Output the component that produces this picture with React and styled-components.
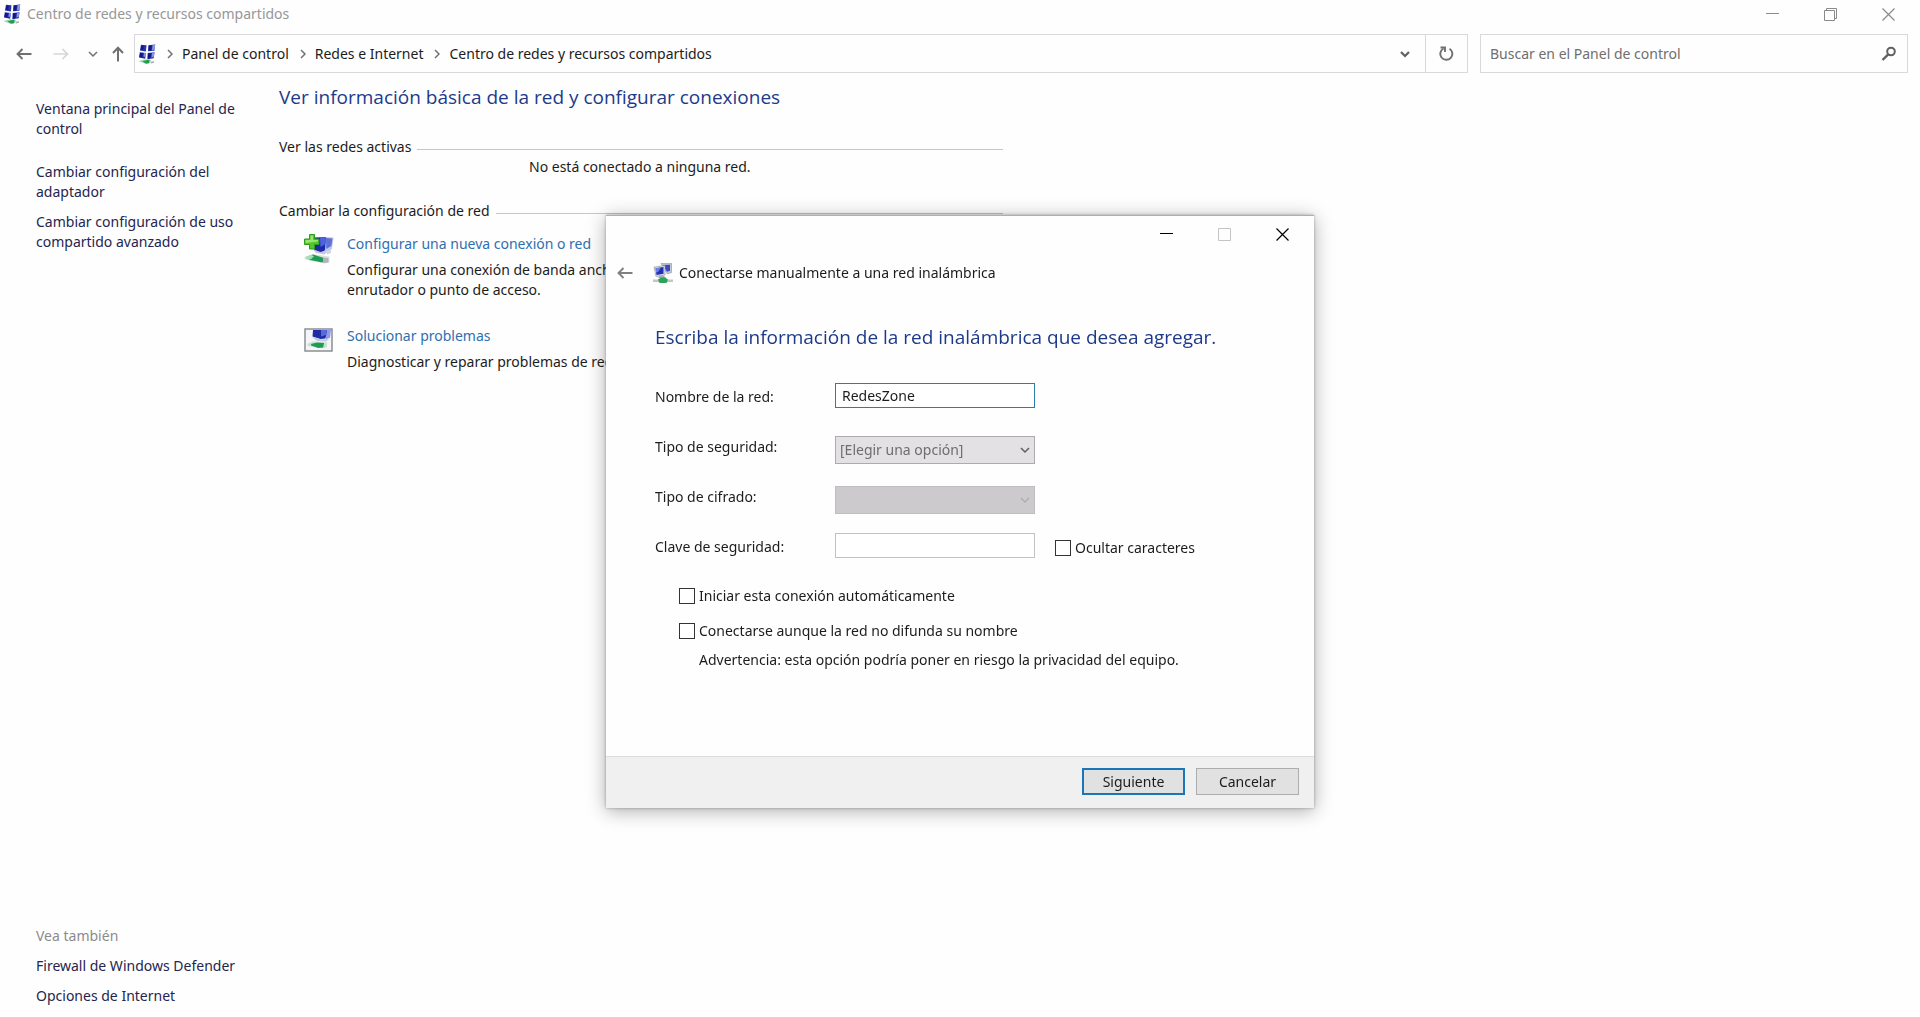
import styled, { createGlobalStyle, css } from 'styled-components';

const App = () => {
  return (
    <>
      <GlobalStyle />
      <Window>
        <TitleBar>
          <Caption>
            <NetworkIcon />
            <span>Centro de redes y recursos compartidos</span>
          </Caption>
          <WindowControls color="#8a8a8a" restore />
        </TitleBar>

        <Toolbar>
          <NavButtons>
            <NavButton $width={20} aria-label="Atrás"><ArrowLeft color="#707070" /></NavButton>
            <NavButton $width={30} aria-label="Adelante" disabled><ArrowRight /></NavButton>
            <NavButton $width={10} aria-label="Recientes"><Chevron color="#707070" /></NavButton>
            <NavButton $width={16} aria-label="Arriba"><ArrowUp /></NavButton>
          </NavButtons>
          <AddressBar>
            <Crumbs>
              <NetworkIcon />
              <Separator />
              <a href="#panel">Panel de control</a>
              <Separator />
              <a href="#redes">Redes e Internet</a>
              <Separator />
              <a href="#centro">Centro de redes y recursos compartidos</a>
            </Crumbs>
            <BarButton $width={40} aria-label="Ubicaciones anteriores">
              <Chevron color="#606060" thick />
            </BarButton>
            <BarButton $width={42} $divider aria-label="Actualizar">
              <RefreshIcon />
            </BarButton>
          </AddressBar>
          <SearchBox>
            <input type="search" aria-label="Buscar" placeholder="Buscar en el Panel de control" />
            <SearchIcon />
          </SearchBox>
        </Toolbar>

        <Body>
          <Sidebar>
            <SideLinks>
              <HomeLink href="#principal">Ventana principal del Panel de control</HomeLink>
              <SideLink href="#adaptador">Cambiar configuración del adaptador</SideLink>
              <SideLink href="#avanzado">Cambiar configuración de uso compartido avanzado</SideLink>
            </SideLinks>
            <SideLinks>
              <SideTitle>Vea también</SideTitle>
              <SideLink href="#firewall">Firewall de Windows Defender</SideLink>
              <SideLink href="#internet">Opciones de Internet</SideLink>
            </SideLinks>
          </Sidebar>

          <Content>
            <Heading as="h1">Ver información básica de la red y configurar conexiones</Heading>
            <Section>
              <SectionTitle>Ver las redes activas</SectionTitle>
              <EmptyText>No está conectado a ninguna red.</EmptyText>
            </Section>
            <Section>
              <SectionTitle>Cambiar la configuración de red</SectionTitle>
              <Task>
                <NewConnectionIcon />
                <div>
                  <a href="#nueva">Configurar una nueva conexión o red</a>
                  <p>
                    Configurar una conexión de banda ancha
                    <br />
                    enrutador o punto de acceso.
                  </p>
                </div>
              </Task>
              <Task>
                <TroubleshootIcon />
                <div>
                  <a href="#problemas">Solucionar problemas</a>
                  <p>Diagnosticar y reparar problemas de red</p>
                </div>
              </Task>
            </Section>
          </Content>
        </Body>
      </Window>

      <Overlay>
        <Dialog role="dialog" aria-labelledby="dialog-title">
          <DialogBar>
            <WindowControls color="#000000" maxColor="#c4c4c4" />
          </DialogBar>
          <DialogHeader>
            <NavButton $width={20} aria-label="Volver"><ArrowLeft color="#808080" /></NavButton>
            <WizardIcon />
            <span id="dialog-title">Conectarse manualmente a una red inalámbrica</span>
          </DialogHeader>
          <Form>
            <Heading>Escriba la información de la red inalámbrica que desea agregar.</Heading>
            <Fields>
              <label htmlFor="nombre">Nombre de la red:</label>
              <TextInput id="nombre" $focused defaultValue="RedesZone" />
              <span />
              <label htmlFor="seguridad">Tipo de seguridad:</label>
              <SelectBox>
                <select id="seguridad" defaultValue="">
                  <option value="">[Elegir una opción]</option>
                </select>
                <Chevron color="#606060" />
              </SelectBox>
              <span />
              <label htmlFor="cifrado">Tipo de cifrado:</label>
              <SelectBox $disabled>
                <select id="cifrado" disabled />
                <Chevron color="#b0aeb0" />
              </SelectBox>
              <span />
              <label htmlFor="clave">Clave de seguridad:</label>
              <TextInput id="clave" />
              <Check>
                <input type="checkbox" />
                Ocultar caracteres
              </Check>
            </Fields>
            <Options>
              <Check>
                <input type="checkbox" />
                Iniciar esta conexión automáticamente
              </Check>
              <Check>
                <input type="checkbox" />
                Conectarse aunque la red no difunda su nombre
              </Check>
              <p>Advertencia: esta opción podría poner en riesgo la privacidad del equipo.</p>
            </Options>
          </Form>
          <Footer>
            <Button $primary>Siguiente</Button>
            <Button>Cancelar</Button>
          </Footer>
        </Dialog>
      </Overlay>
    </>
  );
};

export default App;

const WindowControls = ({ color, maxColor, restore }) => (
  <Controls>
    <button aria-label="Minimizar">
      <svg width="13" height="13" viewBox="0 0 13 13" stroke={color}><path d="M0 5.5h13" /></svg>
    </button>
    <button aria-label="Maximizar">
      <svg width="13" height="13" viewBox="0 0 13 13" fill="none" stroke={maxColor || color}>
        {restore ? <path d="M.5 2.5h10v10h-10zM2.5 2.5v-2h10v10h-2" /> : <path d="M.5.5h12v12h-12z" />}
      </svg>
    </button>
    <button aria-label="Cerrar">
      <svg width="13" height="13" viewBox="0 0 13 13" stroke={color} strokeWidth="1.2">
        <path d="M.5.5l12 12M12.5.5l-12 12" />
      </svg>
    </button>
  </Controls>
);

const ArrowLeft = ({ color }) => (
  <svg width="16" height="12" viewBox="0 0 16 12" fill="none" stroke={color} strokeWidth="1.9">
    <path d="M15.5 6H1.5M6.5 1L1.5 6l5 5" />
  </svg>
);

const ArrowRight = () => (
  <svg width="16" height="12" viewBox="0 0 16 12" fill="none" stroke="#d6d6d6" strokeWidth="1.7">
    <path d="M.5 6h14M9.5 1l5 5-5 5" />
  </svg>
);

const ArrowUp = () => (
  <svg width="12" height="16" viewBox="0 0 12 16" fill="none" stroke="#707070" strokeWidth="2">
    <path d="M6 15.5V1.8M1 7l5-5.2L11 7" />
  </svg>
);

const Chevron = ({ color, thick }) => (
  <svg width="10" height="8" viewBox="0 0 10 8" fill="none" stroke={color} strokeWidth={thick ? 2.2 : 1.5}>
    <path d="M1 2l4 4 4-4" />
  </svg>
);

const Separator = () => (
  <svg className="separator" width="6" height="10" viewBox="0 0 6 10" fill="none" stroke="#707070" strokeWidth="1.5">
    <path d="M1 1l4 4-4 4" />
  </svg>
);

const RefreshIcon = () => (
  <svg width="16" height="16" viewBox="0 0 16 16" fill="none" stroke="#707070" strokeWidth="1.9">
    <path d="M10.5 2.7a6 6 0 1 1-6-.2" />
    <path d="M1.5 1.5H6V6" />
  </svg>
);

const SearchIcon = () => (
  <svg width="16" height="16" viewBox="0 0 16 16" fill="none" stroke="#606060">
    <circle cx="10" cy="5.5" r="3.8" strokeWidth="2" />
    <path d="M7.2 8.3L1.5 14" strokeWidth="2.4" />
  </svg>
);

// four small monitors over a green network cable
const NetworkIcon = () => (
  <svg width="18" height="20" viewBox="0 0 18 20">
    <path d="M3 .8l5.5.4-.6 6.300-6-.9z" fill="#2a35a6" />
    <path d="M10.5 1.2l6.700-.7-.8 6.200-6.400.6z" fill="#2a35a6" />
    <path d="M3.5 1.5l2.200.2-.4 4.300-2.500-.4zM10.800 1.600l3 0-.8 4.800-2.500.2z" fill="#101a86" />
    <path d="M14.600 1l2.600-.4-.6 5-2.600 1z" fill="#8d99e4" />
    <path d="M1.800 8.300l6 .7-.6 5.800-6.200-1.300z" fill="#232ea4" />
    <path d="M9.700 9l6.800-.7-.8 6-6.300 1z" fill="#232ea4" />
    <path d="M2.200 9l2.500.3-.5 4-2.700-.6zM10 9.600l3-.2-.6 4.600-2.600.4z" fill="#0f1884" />
    <path d="M14 8.700l2.500-.4-.6 4.500-2.500 1zM6 8.900l1.800.2-.5 4-1.900-.6z" fill="#8793e4" />
    <path d="M.5 17l7-1.700 5.500.7-1 3-5.500.6z" fill="#9ad8ae" />
    <path d="M4.500 17.200l7-1.700-.5 3.700-3 .5z" fill="#239c4e" />
    <path d="M12.500 17.800l3.500-.5v1.500l-3 .8z" fill="#a9adb5" />
  </svg>
);

const NewConnectionIcon = () => (
  <svg width="30" height="30" viewBox="0 0 30 30">
    <path d="M21 3l8.500.5-1.500 11-5 4.500-3-1z" fill="#bcc5f0" />
    <path d="M22 4l6.500.5-1.200 7.500-5 3z" fill="#5f70d6" />
    <path d="M10 3.500L22 3l-1 13-3 2.500-8-2z" fill="#1c2aa8" />
    <path d="M16 3.500l6-.4-.5 7-5 3z" fill="#4f62dc" />
    <path d="M9 15l7 3 6.500-1.500-1.500 4-9-1.500z" fill="#c3c8da" />
    <path d="M22 17l5-1v3l-4 1.500z" fill="#d3d5de" />
    <path d="M.5 23l8-3 17 2.500v6l-5 1L1 25.500z" fill="#dbe2df" />
    <path d="M3 23.500l6-3 11 3.500-1.500 4.500L6 26z" fill="#1f9c53" />
    <path d="M2 22.700l5-2 3 1.500-3 3-5-.5z" fill="#9fe0b4" />
    <path d="M19 23.500l5.500.5v4.500l-5.500.5z" fill="#aeb4bd" />
    <path d="M5.500.5h5V5H15v5.500h-4.500V15h-5v-4.500h-5V5h5z" fill="#55c52e" stroke="#2f9a20" />
    <path d="M6.500 1.500h2.500V6H14v1.500L1.500 9V6h5z" fill="#98e66c" />
  </svg>
);

const TroubleshootIcon = () => (
  <svg width="30" height="26" viewBox="0 -2 30 26">
    <path d="M1 1h27v22H1z" fill="#f5f5f8" stroke="#8b8f94" strokeWidth="1.5" />
    <path d="M21 2l6-.2-1 8-4 1.500z" fill="#8e9be8" />
    <path d="M9 2h14l-1.500 8.500-5 .5-8-2.500z" fill="#1d2ba4" />
    <path d="M17 2h6l-1 5-5 1.500z" fill="#5869d8" />
    <path d="M8 9l9 2.500 8-.5-3 2.500-9-.5z" fill="#c3c8da" />
    <path d="M3 16l6-2.500 14 1V19l-4 1.500-15-2.500z" fill="#c9dfd2" />
    <path d="M7 16l6-1.500 7 .5-.8 4.500-5 .5-7-2.500z" fill="#1f9c53" />
  </svg>
);

const WizardIcon = () => (
  <svg width="20" height="20" viewBox="0 0 20 20">
    <path d="M8 .5l10.500-.3v9.300l-4 1.500z" fill="#c3c6cf" stroke="#8d919c" strokeWidth=".6" />
    <path d="M9.500 2l7.500-.3v6l-3 1z" fill="#3a4ac6" />
    <path d="M1 4l11-1.500V12L3 13.500z" fill="#d9dbe4" stroke="#8d919c" strokeWidth=".6" />
    <path d="M2.500 5.300l8-1.200v6.600l-7 1.300z" fill="#2230b4" />
    <path d="M3 5.300l5-.8-3 4.500-2 .5z" fill="#6f80e8" />
    <path d="M6 13l4-.7 3 2.700H5z" fill="#a7abb5" />
    <path d="M0 16.500h20v2.500H0z" fill="#bfc8c4" />
    <path d="M5 16.500l3-2h4l3 2-1.500 3.500h-7z" fill="#2ba35a" />
  </svg>
);

const GlobalStyle = createGlobalStyle`
  * {
    box-sizing: border-box;
    margin: 0;
  }
  body {
    background-color: #fefefe;
    color: #1c1c1c;
    font-family: 'Noto Sans', 'Open Sans', sans-serif;
    font-size: 14px;
    line-height: 20px;
  }
  button, input, select {
    font: inherit;
    color: inherit;
  }
  button {
    padding: 0;
    border: none;
    background: none;
  }
  a {
    color: inherit;
    text-decoration: none;
  }
  svg {
    display: block;
    flex: none;
  }
`;

const Window = styled.div`
  min-height: 100vh;
  display: flex;
  flex-direction: column;
`;

const TitleBar = styled.header`
  height: 28px;
  padding: 0 3px;
  display: flex;
  justify-content: space-between;
  align-items: center;
`;

const Caption = styled.div`
  display: flex;
  align-items: center;
  gap: 6px;
  color: #979797;
`;

const Controls = styled.div`
  display: flex;
  button {
    width: 58px;
    height: 28px;
    display: flex;
    align-items: center;
    justify-content: center;
  }
`;

const Toolbar = styled.div`
  height: 45px;
  padding: 6px 12px 0 14px;
  display: flex;
  align-items: stretch;
`;

const NavButtons = styled.nav`
  padding-right: 8px;
  display: flex;
  align-items: center;
  gap: 12px;
`;

const NavButton = styled.button`
  width: ${({ $width }) => $width}px;
  height: 24px;
  display: flex;
  align-items: center;
  justify-content: center;
`;

const AddressBar = styled.div`
  flex: 1;
  display: flex;
  border: 1px solid #d9d9d9;
`;

const Crumbs = styled.div`
  flex: 1;
  padding-left: 3px;
  display: flex;
  align-items: center;
  gap: 9px;
  .separator {
    margin-left: 2px;
  }
`;

const BarButton = styled.button`
  width: ${({ $width }) => $width}px;
  display: flex;
  align-items: center;
  justify-content: center;
  ${({ $divider }) => $divider && css`
    border-left: 1px solid #d9d9d9;
  `}
`;

const SearchBox = styled.div`
  width: 428px;
  margin-left: 12px;
  padding: 0 10px 0 9px;
  display: flex;
  align-items: center;
  border: 1px solid #d9d9d9;
  input {
    flex: 1;
    padding: 0;
    border: none;
    outline: none;
    background: none;
  }
  input::placeholder {
    color: #6f6f6f;
  }
`;

const Body = styled.div`
  flex: 1;
  display: flex;
`;

const Sidebar = styled.aside`
  width: 279px;
  padding: 26px 36px 11px;
  display: flex;
  flex-direction: column;
  justify-content: space-between;
`;

const SideLinks = styled.nav`
  display: flex;
  flex-direction: column;
  gap: 10px;
`;

const SideLink = styled.a`
  color: #25254f;
`;

const HomeLink = styled(SideLink)`
  margin-bottom: 13px;
`;

const SideTitle = styled.h2`
  font-size: 14px;
  font-weight: 400;
  color: #8b8b8b;
`;

const Content = styled.main`
  width: 724px;
  padding-top: 8px;
`;

const Heading = styled.h2`
  font-family: 'Open Sans', 'Noto Sans', sans-serif;
  font-size: 19px;
  line-height: 32px;
  font-weight: 400;
  color: #1d3a8a;
`;

const Section = styled.section`
  margin-top: 24px;
`;

const SectionTitle = styled.h3`
  display: flex;
  align-items: center;
  gap: 6px;
  font-size: 14px;
  font-weight: 400;
  &::after {
    content: '';
    flex: 1;
    height: 1px;
    margin-top: 4px;
    background-color: #c6c6c6;
  }
`;

const EmptyText = styled.p`
  padding-left: 250px;
`;

const Task = styled.div`
  padding: 13px 0 13px 25px;
  display: flex;
  align-items: flex-start;
  gap: 13px;
  a {
    color: #2f6fae;
  }
  p {
    margin-top: 6px;
  }
`;

const Overlay = styled.div`
  position: fixed;
  inset: 0;
  padding-top: 6px;
  display: flex;
  align-items: center;
  justify-content: center;
`;

const Dialog = styled.div`
  width: 708px;
  background-color: #fefefe;
  border-top: 1px solid #b0aeb0;
  box-shadow: 0 3px 18px rgba(0, 0, 0, 0.32), 0 0 3px rgba(0, 0, 0, 0.3);
`;

const DialogBar = styled.div`
  padding: 4px 3px 0;
  display: flex;
  justify-content: flex-end;
`;

const DialogHeader = styled.div`
  padding: 13px 9px 0;
  display: flex;
  align-items: center;
  svg + span {
    margin-left: 6px;
  }
  button {
    margin-right: 18px;
  }
`;

const Form = styled.form`
  padding: 36px 49px 86px;
`;

const Fields = styled.div`
  margin-top: 19px;
  display: grid;
  grid-template-columns: 180px 200px 1fr;
  grid-auto-rows: 50px;
  align-items: center;
`;

const TextInput = styled.input`
  width: 100%;
  height: 25px;
  margin-bottom: 3px;
  padding: 0 6px;
  border: 1px solid ${({ $focused }) => ($focused ? '#2a7fa8' : '#c2c2c6')};
  outline: none;
  background-color: #ffffff;
`;

const SelectBox = styled.div`
  position: relative;
  margin-top: 6px;
  select {
    display: block;
    width: 100%;
    height: 28px;
    padding: 0 4px;
    appearance: none;
    border: 1px solid ${({ $disabled }) => ($disabled ? '#bfbdbf' : '#adabad')};
    border-radius: 0;
    background-color: ${({ $disabled }) => ($disabled ? '#cccacc' : '#e3e1e3')};
    color: #6e6e6e;
    opacity: 1;
  }
  svg {
    position: absolute;
    top: 10px;
    right: 5px;
    pointer-events: none;
  }
`;

const Check = styled.label`
  display: flex;
  align-items: center;
  gap: 4px;
  input {
    appearance: none;
    width: 16px;
    height: 16px;
    margin: 0;
    border: 1px solid #333333;
    background-color: #ffffff;
  }
  ${Fields} & {
    margin: 2px 0 0 20px;
  }
`;

const Options = styled.div`
  margin-top: 14px;
  padding-left: 24px;
  display: flex;
  flex-direction: column;
  gap: 15px;
  p {
    margin-top: -6px;
    padding-left: 20px;
  }
`;

const Footer = styled.footer`
  padding: 11px 15px 13px;
  display: flex;
  justify-content: flex-end;
  gap: 11px;
  background-color: #f1f0f1;
  border-top: 1px solid #dcdcdc;
`;

const Button = styled.button`
  width: 103px;
  height: 27px;
  border: ${({ $primary }) => ($primary ? '2px solid #1b76b8' : '1px solid #adadad')};
  background-color: #e2e1e2;
`;
